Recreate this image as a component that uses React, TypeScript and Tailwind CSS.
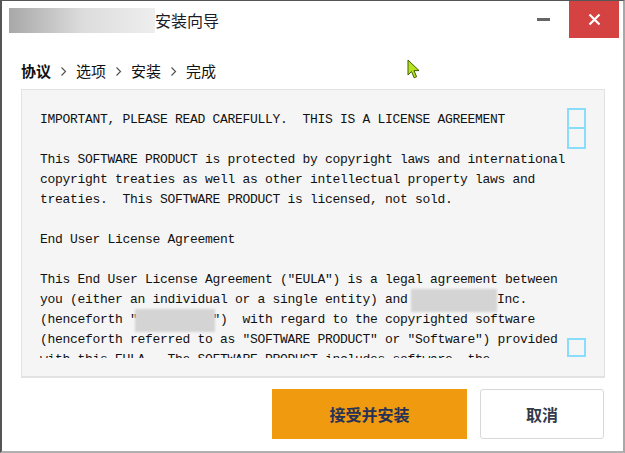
import React from "react";

const cjk = { fontFamily: '"Noto Sans CJK SC", "Noto Sans", sans-serif' };
const mono = { fontFamily: '"Liberation Mono", "Noto Sans CJK SC", monospace' };

const Blur = ({ w, left = 0, right = 0 }: { w: number; left?: number; right?: number }) => (
  <span className="relative inline-block h-[20px] align-top" style={{ width: w }}>
    <span
      className="absolute -top-[1px] -bottom-[2px] bg-[#d4d4d4] blur-[1px]"
      style={{ left: -left, right: -right }}
    />
  </span>
);

const Chevron = () => (
  <svg width="7" height="11" viewBox="0 0 7 11" className="text-[#555]">
    <polyline points="1.5,1.5 5.5,5.5 1.5,9.5" fill="none" stroke="currentColor" strokeWidth="1.2" />
  </svg>
);

export default function App() {
  const steps = ["选项", "安装", "完成"];

  return (
    <div
      className="relative w-[625px] h-[453px] bg-white border-l-2 border-l-[#555] border-t border-t-[#555] border-r-2 border-r-[#a8a8a8] border-b-2 border-b-[#b0b0b0] flex flex-col overflow-hidden"
      style={cjk}
    >
      {/* title bar */}
      <div className="flex h-[38px] shrink-0">
        <div className="flex items-start pl-[7px] pt-[7px] flex-1">
          <div className="w-[146px] h-[25px] bg-gradient-to-r from-[#a8a8a8] via-[#dcdcdc] to-[#eeeeee] blur-[0.5px]" />
          <span className="text-[16px] leading-[25px] text-[#1c1c28]">安装向导</span>
        </div>
        <div className="w-[13px] h-[3px] bg-[#666] mt-[17px] mr-[19px]" />
        <div className="w-[50px] h-[37px] bg-[#d44242] flex items-center justify-center mr-[4px]">
          <svg width="13" height="13" viewBox="0 0 13 13">
            <path d="M1.5 1.5 L11.5 11.5 M11.5 1.5 L1.5 11.5" stroke="white" strokeWidth="2.2" />
          </svg>
        </div>
      </div>

      {/* breadcrumb */}
      <div className="flex items-center gap-[9px] pl-[19px] mt-[22px] h-[20px] text-[15px] leading-[20px] text-[#111]">
        <span className="font-bold">协议</span>
        {steps.map((s) => (
          <React.Fragment key={s}>
            <Chevron />
            <span>{s}</span>
          </React.Fragment>
        ))}
      </div>

      {/* license box */}
      <div className="relative ml-[19px] mr-[18px] mt-[8px] border border-[#e2e2e2] border-b-2 bg-[#f5f5f5] pl-[18px] pt-[20px] pb-[18px]">
        <div className="h-[248px] overflow-hidden">
          <pre className="text-[13px] leading-[20px] tracking-[-0.3px] text-[#111] whitespace-pre" style={mono}>
            {"IMPORTANT, PLEASE READ CAREFULLY.  THIS IS A LICENSE AGREEMENT\n\n"}
            {"This SOFTWARE PRODUCT is protected by copyright laws and international\n"}
            {"copyright treaties as well as other intellectual property laws and\n"}
            {"treaties.  This SOFTWARE PRODUCT is licensed, not sold.\n\n"}
            {"End User License Agreement\n\n"}
            {'This End User License Agreement ("EULA") is a legal agreement between\n'}
            {"you (either an individual or a single entity) and "}
            <Blur w={82} left={4} />
            {"Inc.\n"}
            {'(henceforth "'}
            <Blur w={75} left={3} right={2} />
            {'")  with regard to the copyrighted software\n'}
            {'(henceforth referred to as "SOFTWARE PRODUCT" or "Software") provided\n'}
            {"with this EULA.  The SOFTWARE PRODUCT includes software, the\n"}
          </pre>
        </div>
        {/* stray highlight squares */}
        <div className="absolute left-[545px] top-[18px] w-[19px] h-[41px] border-2 border-[#88dcfc] flex flex-col">
          <div className="h-[19px] border-b-2 border-[#88dcfc]" />
        </div>
        <div className="absolute left-[545px] top-[248px] w-[19px] h-[19px] border-2 border-[#88dcfc]" />
      </div>

      {/* buttons */}
      <div className="flex justify-end gap-[13px] mt-[11px] pr-[19px]">
        <button className="w-[195px] h-[50px] bg-[#f09a10] text-[16px] font-bold text-[#263158]">
          接受并安装
        </button>
        <button className="w-[124px] h-[50px] bg-white border border-[#d8d8d8] rounded-[3px] text-[16px] font-bold text-[#333a48]">
          取消
        </button>
      </div>

      {/* mouse pointer */}
      <svg className="absolute left-[405px] top-[58px]" width="14" height="21" viewBox="0 0 14 21">
        <path
          d="M1 1 L1 16 L4.5 12.5 L7.2 18.8 L9.6 17.8 L7 11.6 L12 11.6 Z"
          fill="#b6e41c"
          stroke="#3f5a08"
          strokeWidth="1"
          strokeLinejoin="round"
        />
      </svg>
    </div>
  );
}
